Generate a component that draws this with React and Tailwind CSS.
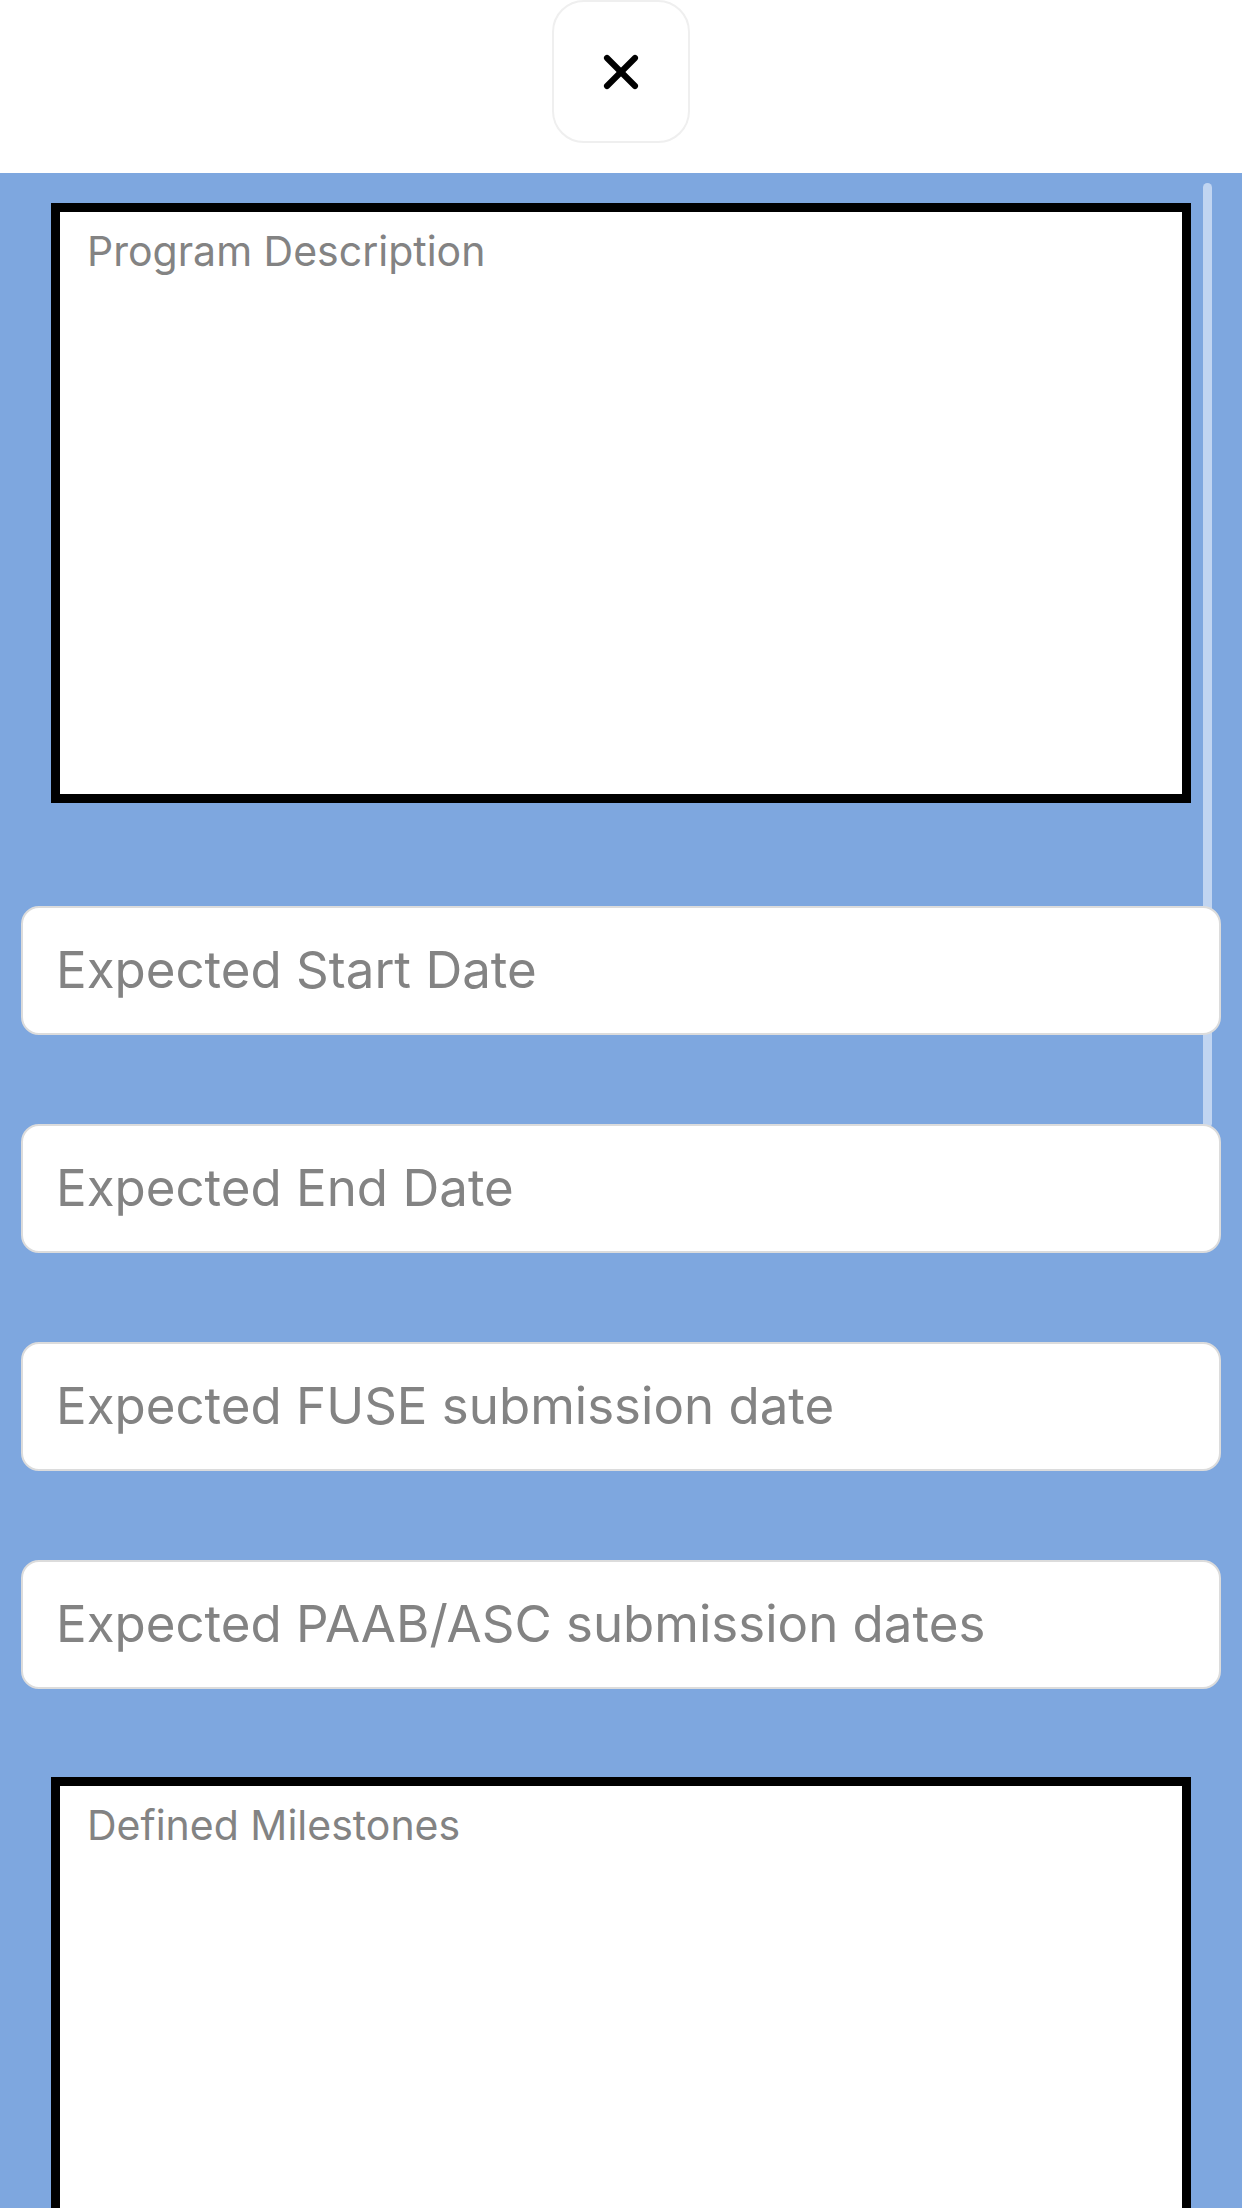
import { X } from "lucide-react";

const font = { fontFamily: "Inter, 'Noto Sans', sans-serif" };

function BoxField({ label, className = "" }) {
  return (
    <textarea
      placeholder={label}
      className={`ml-[51px] w-[1140px] h-[600px] shrink-0 resize-none border-[9px] border-black bg-white pl-[27px] pt-[15px] text-[41px] leading-[48px] text-black placeholder:text-[#838383] outline-none ${className}`}
    />
  );
}

function LineField({ label, className = "" }) {
  return (
    <input
      type="text"
      placeholder={label}
      className={`relative z-10 ml-[21px] w-[1200px] h-[129px] shrink-0 rounded-[18px] border-2 border-[#dcdcdc] bg-white pl-[33px] pb-[2px] text-[51px] text-black placeholder:text-[#838383] outline-none ${className}`}
    />
  );
}

export default function App() {
  return (
    <div className="w-[1242px] h-[2208px] overflow-hidden flex flex-col bg-[#7ea7df]" style={font}>
      <div className="h-[173px] shrink-0 bg-white flex justify-center">
        <button className="w-[138px] h-[143px] rounded-[32px] border-2 border-[#efefef] bg-white flex items-center justify-center">
          <X size={56} strokeWidth={2.6} className="text-black" />
        </button>
      </div>

      <div className="relative flex-1 flex flex-col">
        <div className="absolute left-[1203px] top-[10px] w-[9px] h-[945px] rounded-full bg-[#c1d5f1]" />

        <BoxField label="Program Description" className="mt-[30px]" />
        <LineField label="Expected Start Date" className="mt-[103px]" />
        <LineField label="Expected End Date" className="mt-[89px]" />
        <LineField label="Expected FUSE submission date" className="mt-[89px]" />
        <LineField label="Expected PAAB/ASC submission dates" className="mt-[89px]" />
        <BoxField label="Defined Milestones" className="mt-[88px]" />
      </div>
    </div>
  );
}
